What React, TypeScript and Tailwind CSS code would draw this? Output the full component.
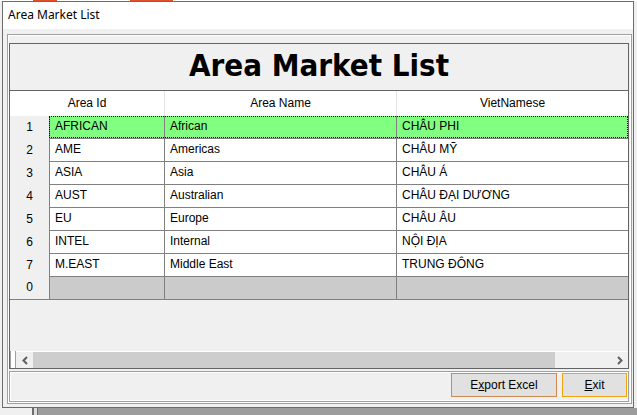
const areaData = [
  { no: "1", id: "AFRICAN", name: "African", viet: "CHÂU PHI" },
  { no: "2", id: "AME", name: "Americas", viet: "CHÂU MỸ" },
  { no: "3", id: "ASIA", name: "Asia", viet: "CHÂU Á" },
  { no: "4", id: "AUST", name: "Australian", viet: "CHÂU ĐẠI DƯƠNG" },
  { no: "5", id: "EU", name: "Europe", viet: "CHÂU ÂU" },
  { no: "6", id: "INTEL", name: "Internal", viet: "NỘI ĐỊA" },
  { no: "7", id: "M.EAST", name: "Middle East", viet: "TRUNG ĐÔNG" },
];

const GridRow = ({ row, selected }: { row: (typeof areaData)[number]; selected: boolean }) => {
  return (
    <div className="flex h-[23px]">
      <div className="w-[39px] flex items-center justify-center bg-[#f0f0f0] pb-[2px]">{row.no}</div>
      <div className={selected ? "relative flex border-b border-[#808080] bg-[#80ff80]" : "relative flex border-b border-[#808080] bg-white"}>
        <div className="w-[115px] border-l border-[#808080] flex items-center pl-[5px] pb-[2px]">{row.id}</div>
        <div className="w-[232px] border-l border-[#808080] flex items-center pl-[5px] pb-[2px]">{row.name}</div>
        <div className="w-[232px] border-l border-[#808080] flex items-center pl-[5px] pb-[2px]">{row.viet}</div>
        {selected && <div className="absolute inset-0 border border-dotted border-black pointer-events-none" />}
      </div>
    </div>
  );
};

const Chevron = ({ dir }: { dir: "left" | "right" }) => (
  <svg width="8" height="9" viewBox="0 0 8 9">
    <path
      d={dir === "left" ? "M6 1 L2.5 4.5 L6 8" : "M2 1 L5.5 4.5 L2 8"}
      fill="none"
      stroke="#606060"
      strokeWidth="2"
    />
  </svg>
);

export default function App() {
  return (
    <div className="w-[637px] h-[415px] overflow-hidden bg-[#f0f0f0] font-['Liberation_Sans',Arial,sans-serif] text-[12px] text-black">
      {/* bit of the app behind the window */}
      <div className="h-[1px] flex bg-white">
        <div className="ml-[33px] w-[24px] bg-[#e0502a]" />
        <div className="ml-[73px] w-[43px] bg-[#e0502a]" />
      </div>

      <div className="ml-[2px] w-[632px] h-[407px] border border-[#6b6b6b] flex flex-col">
        <div className="h-[27px] bg-white flex items-center pl-[5px] pb-[2px] font-['Noto_Sans',sans-serif] text-[12px]">
          Area Market List
        </div>

        <div className="flex-1 bg-[#f0f0f0] pt-[5px] pl-[4px]">
          <div className="w-[625px] h-[370px] border border-[#a0a0a0]">
            <div className="h-full border border-white pt-[7px] pr-[1px] flex flex-col">
              {/* grid */}
              <div className="w-[620px] h-[326px] border border-[#646464] flex flex-col">
                <div className="h-[47px] border-b border-[#646464] flex items-center justify-center pb-[3px]">
                  <span className="font-['DejaVu_Sans_Condensed','DejaVu_Sans',sans-serif] font-bold text-[31px] leading-none">
                    Area Market List
                  </span>
                </div>

                <div className="flex h-[25px] bg-white">
                  <div className="w-[154px] flex items-center justify-center pb-[1px]">Area Id</div>
                  <div className="w-[232px] border-l border-[#e3e3e3] flex items-center justify-center pb-[1px]">Area Name</div>
                  <div className="w-[232px] border-l border-[#e3e3e3] flex items-center justify-center pb-[1px]">VietNamese</div>
                </div>

                {areaData.map((row, index) => (
                  <GridRow key={row.id} row={row} selected={index === 0} />
                ))}

                <div className="flex h-[23px] border-b border-[#808080]">
                  <div className="w-[39px] flex items-center justify-center bg-[#f0f0f0] pb-[2px]">0</div>
                  <div className="w-[115px] border-l border-[#808080] bg-[#cbcbcb]" />
                  <div className="w-[232px] border-l border-[#808080] bg-[#cbcbcb]" />
                  <div className="w-[232px] border-l border-[#808080] bg-[#cbcbcb]" />
                </div>

                <div className="flex-1 bg-[#f0f0f0]" />

                {/* horizontal scroll bar */}
                <div className="flex h-[17px]">
                  <div className="w-[6px] border-x border-[#a0a0a0] bg-white" />
                  <div className="flex-1 flex border-t border-white bg-[#f0f0f0]">
                    <div className="w-[17px] flex items-center justify-center">
                      <Chevron dir="left" />
                    </div>
                    <div className="w-[522px] bg-[#cdcdcd]" />
                    <div className="flex-1" />
                    <div className="w-[17px] flex items-center justify-center">
                      <Chevron dir="right" />
                    </div>
                  </div>
                </div>
              </div>

              {/* bottom panel */}
              <div className="mt-[2px] w-[620px] h-[31px] border border-[#a0a0a0]">
                <div className="h-full border border-white flex justify-end gap-[5px]">
                  <button className="w-[106px] h-[24px] bg-[#e1e1e1] border border-[#cf8a52] flex items-center justify-center pb-[1px]">
                    E<span className="underline">x</span>port Excel
                  </button>
                  <button className="w-[65px] h-[24px] bg-[#e1e1e1] border border-[#f2a40c] flex items-center justify-center pb-[1px]">
                    <span className="underline">E</span>xit
                  </button>
                </div>
              </div>
            </div>
          </div>
        </div>
      </div>

      <div className="h-[7px] flex">
        <div className="w-[32px] bg-[#f0f0f0]" />
        <div className="w-[2px] bg-[#6e6e6e]" />
        <div className="w-[3px] bg-[#dcdcdc]" />
        <div className="w-[1px] bg-[#6e6e6e]" />
        <div className="flex-1 bg-[#9c9c9c]" />
      </div>
    </div>
  );
}
